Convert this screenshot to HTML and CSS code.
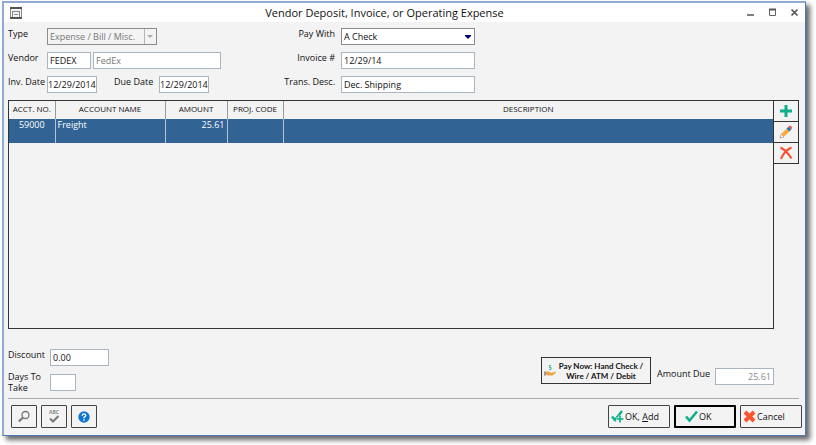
FILE: index.html
```html
<!DOCTYPE html>
<html lang="en">
<head>
    <meta charset="UTF-8">
    <meta name="viewport" content="width=device-width, initial-scale=1.0">
    <title>Vendor Deposit, Invoice, or Operating Expense</title>
    <link rel="stylesheet" href="styles.css">
</head>
<body>
    <div class="window">
        <header class="titlebar">
            <svg class="app-icon" width="12" height="12" viewBox="0 0 12 12">
                <rect x="0.5" y="0.5" width="11" height="10" fill="#f4f4f4" stroke="#888"/>
                <path d="M0 1h12M0 11h12" stroke="#555" stroke-width="2"/>
                <path d="M2 4.500h8M2.500 4v6M9.500 4v6M4 7.500h4" stroke="#888" fill="none"/>
            </svg>
            <h1>Vendor Deposit, Invoice, or Operating Expense</h1>
            <div class="window-controls">
                <button aria-label="Minimize"><svg width="9" height="9" viewBox="0 0 9 9"><path d="M1 7h7" stroke="#555" stroke-width="1.500"/></svg></button>
                <button aria-label="Maximize"><svg width="9" height="9" viewBox="0 0 9 9"><path d="M1.500 1v6.500h6V1" stroke="#666" fill="none"/><path d="M1 1.500h7" stroke="#555" stroke-width="2"/></svg></button>
                <button aria-label="Close"><svg width="9" height="9" viewBox="0 0 9 9"><path d="M1.500 1.500l6 6M7.500 1.500l-6 6" stroke="#555" stroke-width="1.700"/></svg></button>
            </div>
        </header>

        <main class="content">
            <form class="fields">
                <div class="field-row">
                    <label for="type" class="short-label">Type</label>
                    <select id="type" class="type-select" disabled>
                        <option>Expense / Bill / Misc.</option>
                    </select>
                </div>
                <label for="payWith" class="right-label">Pay With</label>
                <select id="payWith" class="pay-select">
                    <option>A Check</option>
                </select>

                <div class="field-row">
                    <label for="vendor" class="short-label">Vendor</label>
                    <input type="text" id="vendor" class="vendor-code" value="FEDEX">
                    <input type="text" class="vendor-name" value="FedEx" aria-label="Vendor name" readonly>
                </div>
                <label for="invoice" class="right-label">Invoice #</label>
                <input type="text" id="invoice" value="12/29/14">

                <div class="field-row">
                    <label for="invDate" class="short-label">Inv. Date</label>
                    <input type="text" id="invDate" class="date" value="12/29/2014">
                    <label for="dueDate" class="due-label">Due Date</label>
                    <input type="text" id="dueDate" class="date" value="12/29/2014">
                </div>
                <label for="desc" class="right-label">Trans. Desc.</label>
                <input type="text" id="desc" value="Dec. Shipping">
            </form>

            <div class="grid-area">
                <div class="grid-box">
                    <table>
                        <colgroup>
                            <col class="col-no">
                            <col class="col-name">
                            <col class="col-amount">
                            <col class="col-proj">
                            <col>
                        </colgroup>
                        <thead>
                            <tr>
                                <th>ACCT. NO.</th>
                                <th>ACCOUNT NAME</th>
                                <th>AMOUNT</th>
                                <th>PROJ. CODE</th>
                                <th>DESCRIPTION</th>
                            </tr>
                        </thead>
                        <tbody>
                            <tr class="selected">
                                <td class="center">59000</td>
                                <td>Freight</td>
                                <td class="number">25.61</td>
                                <td></td>
                                <td></td>
                            </tr>
                        </tbody>
                    </table>
                </div>
                <div class="grid-buttons">
                    <button aria-label="Add row"><svg width="14" height="14" viewBox="0 0 14 14"><path d="M7 1v12M1 7h12" stroke="#0cb08a" stroke-width="3"/></svg></button>
                    <button aria-label="Edit row">
                        <svg width="14" height="14" viewBox="0 0 14 14">
                            <path d="M1 13l1.200-4 2.800 2.800z" fill="#fff" stroke="#999" stroke-width="0.800"/>
                            <path d="M2.200 9L8.500 2.700l2.800 2.800L5 11.800z" fill="#fbab3a"/>
                            <path d="M7.600 3.600l1.800-1.800 2.800 2.800-1.800 1.800z" fill="#1874cd"/>
                            <path d="M9.400 1.800Q11 0 12.500 1.500T12.200 4.600z" fill="#f4502c"/>
                        </svg>
                    </button>
                    <button aria-label="Delete row"><svg width="14" height="14" viewBox="0 0 14 14"><path d="M1.500 1.500Q8 5 12.500 12.500M12.500 1.500Q5 5 2 13" stroke="#f8512f" stroke-width="2" fill="none"/></svg></button>
                </div>
            </div>

            <div class="summary">
                <div class="discounts">
                    <label for="discount">Discount</label>
                    <input type="text" id="discount" value="0.00">
                    <label for="days" class="days-label">Days To Take</label>
                    <input type="text" id="days" class="days">
                </div>
                <div class="payment">
                    <button class="pay-now">
                        <svg width="12" height="12" viewBox="0 0 12 12">
                            <path d="M7 0.500H5.500v2H7v2H5.200" stroke="#2bb795" fill="none"/>
                            <path d="M0 6.500h2v4H0z" fill="#9a9a9a"/>
                            <path d="M2 6.500l3 0 1.500 1.300H8L11.500 6.500 12 7.500 8.500 10.500H4L2 9.500z" fill="#f0a23f"/>
                        </svg>
                        <span>Pay Now: Hand Check /<br>Wire / ATM / Debit</span>
                    </button>
                    <label for="amountDue">Amount Due</label>
                    <input type="text" id="amountDue" class="amount-due" value="25.61" readonly>
                </div>
            </div>

            <footer class="footer">
                <div class="tools">
                    <button aria-label="Search"><svg width="14" height="14" viewBox="0 0 14 14"><circle cx="8.500" cy="5" r="3.500" fill="none" stroke="#777" stroke-width="1.300"/><path d="M6 7.500L1.800 11.500" stroke="#777" stroke-width="2.200"/></svg></button>
                    <button aria-label="Spelling">
                        <svg width="14" height="16" viewBox="0 0 14 16">
                            <text x="7" y="5" text-anchor="middle" class="abc">ABC</text>
                            <path d="M3 9.500l3 3 5.500-5.500" fill="none" stroke="#777" stroke-width="2"/>
                        </svg>
                    </button>
                    <button aria-label="Help">
                        <svg width="12" height="12" viewBox="0 0 12 12">
                            <circle cx="6" cy="6" r="5.700" fill="#1177d1"/>
                            <path d="M4.200 4.700Q4.300 2.900 6 2.900T7.800 4.500Q7.800 5.500 6 6.300V7.300" fill="none" stroke="#fff" stroke-width="1.300"/>
                            <path d="M6 8.200v1.500" stroke="#fff" stroke-width="1.400"/>
                        </svg>
                    </button>
                </div>
                <div class="actions">
                    <button>
                        <svg width="13" height="13" viewBox="0 0 13 13"><path d="M1 6.500l3 3.500L11 1" fill="none" stroke="#0cb08a" stroke-width="2.400"/><path d="M9 5.500v7M5.500 9H13" stroke="#f3f3f3" stroke-width="3"/><path d="M9 5.500v7M6 9h6.500" stroke="#0cb08a" stroke-width="1.600"/></svg>
                        <span>OK, <u>A</u>dd</span>
                    </button>
                    <button class="default">
                        <svg width="13" height="13" viewBox="0 0 13 13"><path d="M1 6.500l3.500 4L12 1.500" fill="none" stroke="#0cb08a" stroke-width="2.600"/></svg>
                        <span>OK</span>
                    </button>
                    <button>
                        <svg width="13" height="13" viewBox="0 0 13 13"><path d="M2 2l9 9M11 2l-9 9" stroke="#fb5230" stroke-width="4"/></svg>
                        <span>Cancel</span>
                    </button>
                </div>
            </footer>
        </main>
    </div>
</body>
</html>
```
FILE: styles.css
```css
* {
    box-sizing: border-box;
}
body {
    margin: 0;
    padding: 1px 10px 9px 2px;
    height: 100vh;
    background-color: #fff;
    font-family: 'Open Sans', 'Noto Sans', sans-serif;
    font-size: 9px;
    line-height: 11px;
    color: #111;
}
button, input, select {
    font: inherit;
    color: inherit;
    margin: 0;
}
.window {
    display: flex;
    flex-direction: column;
    height: 100%;
    min-height: 360px;
    border: 2px solid #8faad6;
    border-right: 1px solid #4f76b5;
    border-bottom: 1px solid #4f76b5;
    background-color: #f3f3f3;
    box-shadow: 4px 4px 5px rgba(0, 0, 0, 0.6);
}
.titlebar {
    display: flex;
    align-items: center;
    height: 19px;
    padding: 0 6px;
    background-color: #fff;
}
.titlebar h1 {
    flex: 1;
    margin: 0;
    padding-left: 1px;
    font-size: 11px;
    font-weight: normal;
    text-align: center;
}
.window-controls {
    display: flex;
    gap: 13px;
}
.window-controls button {
    display: flex;
    padding: 0;
    border: none;
    background: none;
}
.content {
    flex: 1;
    display: flex;
    flex-direction: column;
    padding: 6px 5px 7px 4px;
}
.fields {
    display: grid;
    grid-template-columns: 278px 49px 140px;
    row-gap: 7px;
}
.field-row {
    display: flex;
}
label {
    white-space: nowrap;
}
.short-label {
    width: 39px;
}
.right-label {
    justify-self: end;
}
.fields > input, .fields > select {
    margin-left: 6px;
}
input, select {
    height: 17px;
    min-width: 0;
    padding: 0 2px;
    border: 1px solid #abb5c0;
    border-radius: 0;
    background-color: #fff;
    outline: none;
}
select {
    appearance: none;
    border-color: #8c8c8c;
    background-repeat: no-repeat;
}
.type-select {
    width: 110px;
    color: #777;
    opacity: 1;
    background-color: #f3f3f3;
    background-image: linear-gradient(#b5b5b5, #b5b5b5), url("data:image/svg+xml,%3Csvg xmlns='http://www.w3.org/2000/svg' viewBox='0 0 6 3'%3E%3Cpath d='M0 0h6L3 3z' fill='%23aaa'/%3E%3C/svg%3E");
    background-size: 1px 100%, 6px 3px;
    background-position: right 11px top, right 3px center;
}
.pay-select {
    background-image: url("data:image/svg+xml,%3Csvg xmlns='http://www.w3.org/2000/svg' viewBox='0 0 6 4'%3E%3Cpath d='M0 0h6v1L3 4 0 1z' fill='%23000080'/%3E%3C/svg%3E");
    background-size: 6px 4px;
    background-position: right 3px center;
}
.vendor-code {
    width: 44px;
    margin-right: 2px;
}
.vendor-name {
    width: 128px;
    color: #777;
}
.date {
    width: 50px;
    padding: 0;
}
.due-label {
    width: 62px;
    padding-left: 17px;
}
.grid-area {
    flex: 1;
    display: flex;
    margin-top: 7px;
}
.grid-box {
    flex: 1;
    border: 1px solid #333;
}
table {
    width: 100%;
    table-layout: fixed;
    border-collapse: collapse;
}
.col-no {
    width: 46px;
}
.col-name {
    width: 110px;
}
.col-amount {
    width: 62px;
}
.col-proj {
    width: 56px;
}
th {
    height: 18px;
    padding: 0 0 4px;
    border-right: 1px solid #999;
    font-size: 8px;
    font-weight: normal;
}
td {
    height: 24px;
    padding: 0 2px;
    border-right: 1px solid #b5c3d3;
    vertical-align: top;
}
th:last-child, td:last-child {
    border-right: none;
}
.selected {
    background-color: #316395;
    color: #fff;
}
.center {
    text-align: center;
}
.number {
    text-align: right;
}
.grid-buttons {
    display: flex;
    flex-direction: column;
    width: 25px;
}
.grid-buttons button {
    display: flex;
    align-items: center;
    justify-content: center;
    height: 22px;
    margin-bottom: -1px;
    padding: 0;
    border: 1px solid #333;
    border-left: none;
    background-color: #f3f3f3;
}
.grid-area, .summary {
    margin-right: 1px;
}
.summary {
    display: flex;
    justify-content: space-between;
    padding: 20px 25px 7px 0;
    border-bottom: 1px solid #aaa;
}
.discounts {
    display: grid;
    grid-template-columns: 42px 59px;
    row-gap: 8px;
}
.discounts .days-label {
    height: 17px;
    margin-top: -3px;
    white-space: normal;
}
.days {
    width: 26px;
}
.payment {
    display: flex;
    align-items: flex-start;
    padding-top: 8px;
}
.pay-now {
    display: flex;
    align-items: center;
    width: 110px;
    height: 27px;
    padding: 0 4px 0 2px;
    margin-right: 6px;
    border: 1px solid #333;
    background-color: #f3f3f3;
    font-family: Lato, sans-serif;
    font-size: 8px;
    line-height: 10px;
    font-weight: bold;
}
.pay-now span {
    flex: 1;
    white-space: nowrap;
}
.payment label {
    width: 58px;
    padding-top: 11px;
}
.amount-due {
    width: 59px;
    margin-top: 11px;
    color: #888;
    text-align: right;
}
.footer {
    display: flex;
    justify-content: space-between;
    padding: 6px 0 0 3px;
    margin-right: -2px;
}
.tools, .actions {
    display: flex;
    gap: 4px;
}
.footer button {
    display: flex;
    align-items: center;
    height: 23px;
    padding: 0 2px;
    border: 1px solid #444;
    border-radius: 1px;
    background-color: #f3f3f3;
    white-space: nowrap;
}
.tools button {
    justify-content: center;
    width: 26px;
}
.actions button {
    width: 62px;
    gap: 1px;
}
.actions .default {
    padding-left: 9px;
    border: 2px solid #000;
}
.abc {
    font-size: 5px;
    font-weight: bold;
    fill: #888;
}
```
